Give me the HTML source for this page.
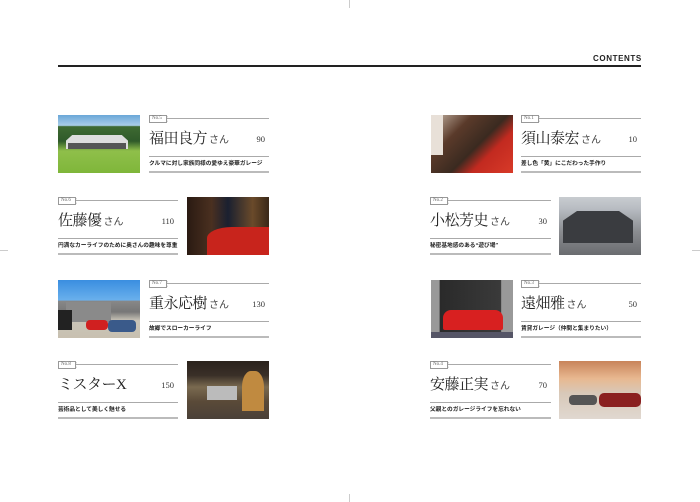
<!DOCTYPE html>
<html><head><meta charset="utf-8"><style>
*{margin:0;padding:0;box-sizing:border-box}
body{width:700px;height:502px;background:#fff;position:relative;overflow:hidden;font-family:"Liberation Serif","Noto Serif CJK SC",serif;color:#222}
.a{position:absolute}
.e{position:absolute;height:58px}
.e .lbl{position:absolute;left:0;top:0;height:8px;border:1px solid #999;font-size:5px;line-height:6px;padding:0 2px;color:#666;background:#fff;width:18px;z-index:2;font-family:"Liberation Serif",serif}
.e .lbl:after{content:"";position:absolute;right:-4px;top:0;width:3px;height:6px;border-left:1px solid #999;border-radius:50%}
.e .l1{position:absolute;left:18px;right:0;top:3px;height:1px;background:#aaa}
.e .nm{position:absolute;left:0;top:13px;font-size:15px;line-height:22px;color:#222;white-space:nowrap;letter-spacing:-0.5px}
.e .nm small{font-family:"Liberation Sans","Noto Sans CJK JP",sans-serif;font-size:10px;color:#444;margin-left:2px;letter-spacing:0}
.e .pg{position:absolute;right:4px;top:19px;font-size:8.5px;color:#333}
.e .l2{position:absolute;left:0;right:0;top:41px;height:1px;background:#aaa}
.e .sb{position:absolute;left:0;top:45px;font-family:"Liberation Sans","Noto Sans CJK JP",sans-serif;font-weight:bold;font-size:5.7px;line-height:8px;color:#222;white-space:nowrap}
.e .l3{position:absolute;left:0;right:0;top:56px;height:2px;background:#bbb}
.im{position:absolute;width:82px;height:58px;overflow:hidden}
</style></head><body>
<div class="a" style="left:349px;top:0;width:1px;height:8px;background:#ccc"></div>
<div class="a" style="left:349px;top:494px;width:1px;height:8px;background:#ccc"></div>
<div class="a" style="left:0;top:250px;width:8px;height:1px;background:#ccc"></div>
<div class="a" style="left:692px;top:250px;width:8px;height:1px;background:#ccc"></div>
<div class="a" style="left:593px;top:54px;font-family:'Liberation Sans',sans-serif;font-weight:bold;font-size:8px;letter-spacing:0.6px;color:#222">CONTENTS</div>
<div class="a" style="left:58px;top:65px;width:583px;height:2px;background:#222"></div>

<!-- L1 -->
<div class="im" style="left:58px;top:115px;background:linear-gradient(#6aa7d8 0,#a9cde8 18%,#3e6a32 20%,#2f5a2a 45%,#8fbf4a 62%,#7fb63a 100%)">
<div class="a" style="left:8px;top:20px;width:62px;height:14px;background:#ddd;clip-path:polygon(10% 0,90% 0,100% 40%,100% 100%,0 100%,0 40%)"></div>
<div class="a" style="left:10px;top:28px;width:58px;height:6px;background:#555"></div></div>
<div class="e" style="left:149px;top:115px;width:120px"><div class="lbl">No.5</div><div class="l1"></div><div class="nm">福田良方<small>さん</small></div><div class="pg">90</div><div class="l2"></div><div class="sb">クルマに対し家族同様の愛ゆえ豪華ガレージ</div><div class="l3"></div></div>

<!-- L2 -->
<div class="e" style="left:58px;top:197px;width:120px"><div class="lbl">No.6</div><div class="l1"></div><div class="nm">佐藤優<small>さん</small></div><div class="pg">110</div><div class="l2"></div><div class="sb">円満なカーライフのために奥さんの趣味を尊重</div><div class="l3"></div></div>
<div class="im" style="left:187px;top:197px;background:linear-gradient(90deg,#2a1a12,#4a3020 30%,#1a2030 50%,#6a4a2a 80%,#3a2818)">
<div class="a" style="left:20px;top:30px;width:62px;height:28px;background:#c8241c;border-radius:40% 0 0 0"></div></div>

<!-- L3 -->
<div class="im" style="left:58px;top:280px;background:linear-gradient(#3a8ee0 0,#6ab0ec 35%,#888 36%,#777 55%,#c9c4b8 70%,#c8c0b0 100%)">
<div class="a" style="left:8px;top:22px;width:45px;height:20px;background:#8a8a8a"></div>
<div class="a" style="left:28px;top:40px;width:22px;height:10px;background:#d02020;border-radius:4px"></div>
<div class="a" style="left:50px;top:40px;width:28px;height:12px;background:#3a5a8a;border-radius:4px"></div>
<div class="a" style="left:0;top:30px;width:14px;height:20px;background:#222"></div></div>
<div class="e" style="left:149px;top:280px;width:120px"><div class="lbl">No.7</div><div class="l1"></div><div class="nm">重永応樹<small>さん</small></div><div class="pg">130</div><div class="l2"></div><div class="sb">故郷でスローカーライフ</div><div class="l3"></div></div>

<!-- L4 -->
<div class="e" style="left:58px;top:361px;width:120px"><div class="lbl">No.8</div><div class="l1"></div><div class="nm">ミスターX</div><div class="pg">150</div><div class="l2"></div><div class="sb">芸術品として美しく魅せる</div><div class="l3"></div></div>
<div class="im" style="left:187px;top:361px;background:linear-gradient(#2a221c 0,#3a3028 25%,#7a6a50 45%,#5a4a38 70%,#4a4038 100%)">
<div class="a" style="left:55px;top:10px;width:22px;height:40px;background:#c08a40;border-radius:40% 40% 0 0"></div>
<div class="a" style="left:20px;top:25px;width:30px;height:14px;background:#bbb"></div></div>

<!-- R1 -->
<div class="im" style="left:431px;top:115px;background:linear-gradient(135deg,#c8b8a8 0,#5a3a2a 30%,#3a2a20 55%,#c22a20 70%,#d83a28 100%)">
<div class="a" style="left:0;top:0;width:12px;height:40px;background:#e8e0d8"></div></div>
<div class="e" style="left:521px;top:115px;width:120px"><div class="lbl">No.1</div><div class="l1"></div><div class="nm">須山泰宏<small>さん</small></div><div class="pg">10</div><div class="l2"></div><div class="sb">差し色「黄」にこだわった手作り</div><div class="l3"></div></div>

<!-- R2 -->
<div class="e" style="left:430px;top:197px;width:121px"><div class="lbl">No.2</div><div class="l1"></div><div class="nm">小松芳史<small>さん</small></div><div class="pg">30</div><div class="l2"></div><div class="sb">秘密基地感のある“遊び場”</div><div class="l3"></div></div>
<div class="im" style="left:559px;top:197px;background:linear-gradient(#c8ccd0 0,#b8bcc2 20%,#8a8c90 60%,#6a6c70 100%)">
<div class="a" style="left:4px;top:14px;width:70px;height:32px;background:#3a3c40;clip-path:polygon(20% 0,80% 0,100% 30%,100% 100%,0 100%,0 30%)"></div></div>

<!-- R3 -->
<div class="im" style="left:431px;top:280px;background:linear-gradient(90deg,#999 0,#999 10%,#2a2a2a 11%,#3a3a3a 85%,#999 86%)">
<div class="a" style="left:12px;top:30px;width:60px;height:20px;background:#d82020;border-radius:8px 8px 2px 2px"></div>
<div class="a" style="left:0;top:52px;width:82px;height:6px;background:#556"></div></div>
<div class="e" style="left:521px;top:280px;width:120px"><div class="lbl">No.3</div><div class="l1"></div><div class="nm">遠畑雅<small>さん</small></div><div class="pg">50</div><div class="l2"></div><div class="sb">賃貸ガレージ（仲間と集まりたい）</div><div class="l3"></div></div>

<!-- R4 -->
<div class="e" style="left:430px;top:361px;width:121px"><div class="lbl">No.4</div><div class="l1"></div><div class="nm">安藤正実<small>さん</small></div><div class="pg">70</div><div class="l2"></div><div class="sb">父親とのガレージライフを忘れない</div><div class="l3"></div></div>
<div class="im" style="left:559px;top:361px;background:linear-gradient(#c8845a 0,#e8b890 30%,#d8c8b8 55%,#e0d8d0 100%)">
<div class="a" style="left:40px;top:32px;width:42px;height:14px;background:#8a2020;border-radius:5px"></div>
<div class="a" style="left:10px;top:34px;width:28px;height:10px;background:#555;border-radius:4px"></div></div>
</body></html>
